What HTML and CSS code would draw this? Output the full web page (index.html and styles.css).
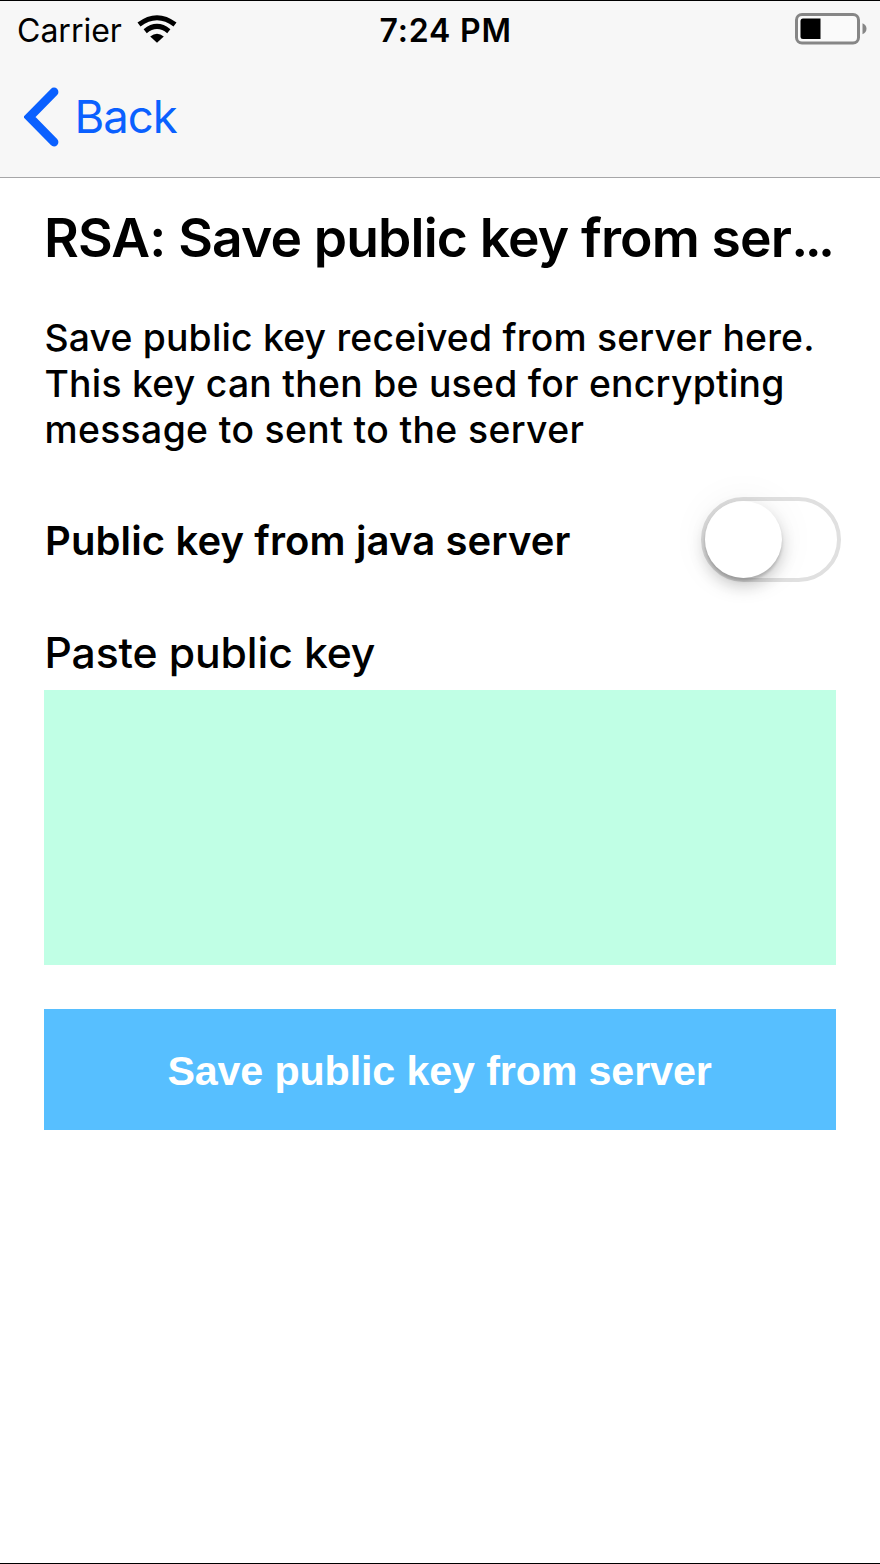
FILE: index.html
```html
<!DOCTYPE html>
<html lang="en">
<head>
<meta charset="utf-8">
<title>RSA: Save public key from server</title>
<link rel="stylesheet" href="styles.css">
</head>
<body>
<div class="screen">
  <header class="header">
    <div class="status">
      <div class="status-left">
        <span class="carrier">Carrier</span>
        <svg class="wifi" width="40" height="30" viewBox="0 0 40 30">
          <path d="M20 27.8 L13.2 21.4 Q20 16.2 26.8 21.4 Z" fill="#000"/>
          <path d="M8.2 16.2 Q20 6.6 31.8 16.2" fill="none" stroke="#000" stroke-width="5"/>
          <path d="M2 9.5 Q20 -4.1 38 9.5" fill="none" stroke="#000" stroke-width="5"/>
        </svg>
      </div>
      <span class="time">7:24 PM</span>
      <svg class="battery" width="74" height="34" viewBox="0 0 74 34">
        <rect x="3.5" y="2.5" width="62" height="28.5" rx="5.5" fill="#fff" fill-opacity=".4" stroke="#868686" stroke-width="3"/>
        <path d="M10 6.5 H27.5 V27 H10 Q7.5 27 7.5 24.5 V9 Q7.5 6.5 10 6.5 Z" fill="#000"/>
        <path d="M69.5 11.3 Q73.5 13 73.5 16.8 Q73.5 20.6 69.5 22.3 Z" fill="#868686"/>
      </svg>
    </div>
    <nav class="nav">
      <svg class="chevron" width="36" height="60" viewBox="0 0 36 60">
        <path d="M30 5 L5.5 30 L30 55" fill="none" stroke="#0a60ff" stroke-width="8.8" stroke-linecap="round" stroke-linejoin="miter"/>
      </svg>
      <span class="back">Back</span>
    </nav>
  </header>
  <main class="content">
    <h1 class="title">RSA: Save public key from ser<span class="ellipsis">...</span></h1>
    <p class="description">Save public key received from server here.<br><span class="wide">This key can then be used for encrypting</span><br><span class="wider">message to sent to the server</span></p>
    <div class="option">
      <span class="option-label">Public key from java server</span>
      <div class="switch"><div class="knob"></div></div>
    </div>
    <label class="field-label">Paste public key</label>
    <div class="field"></div>
    <div class="save"><span class="save-label">Save public key from server</span></div>
  </main>
</div>
</body>
</html>
```
FILE: styles.css
```css
* { box-sizing: border-box; }
body { margin: 0; background: #fff; color: #000; font-family: Inter, "Liberation Sans", sans-serif; }
.screen { height: 1564px; border-top: 1px solid #000; border-bottom: 1px solid #000; overflow: hidden; }
.header { height: 177px; background: #f7f7f7; border-bottom: 1px solid #a6a6a8; }
.status { display: grid; grid-template-columns: 1fr auto 1fr; align-items: center; height: 58px; padding: 0 13.5px 0 17px; font-size: 32px; line-height: 56px; }
.status-left { display: flex; align-items: center; gap: 15px; }
.carrier { padding-top: 2px; }
.wifi { display: block; }
.time { padding: 2px 0 0 8px; font-weight: 600; letter-spacing: .85px; }
.battery { display: block; justify-self: end; margin-bottom: 2px; }
.nav { display: flex; align-items: center; height: 115px; padding-left: 24px; color: #0a60ff; font-size: 45.5px; letter-spacing: -1px; }
.chevron { display: block; margin-right: 14.5px; }
.content { padding: 30px 44px 0; }
.title { margin: 0; font-size: 53.4px; line-height: 60px; font-weight: 600; letter-spacing: -.84px; white-space: nowrap; }
.ellipsis { letter-spacing: -3.6px; }
.description { margin: 47px 0 0; padding-left: .4px; font-size: 37.3px; line-height: 46px; font-weight: 500; letter-spacing: .21px; white-space: nowrap; }
.wide { letter-spacing: .28px; }
.wider { letter-spacing: .37px; }
.option { display: flex; justify-content: space-between; align-items: center; height: 85px; margin: 44px -5px 0 0; }
.option-label { padding: 2px 0 0 1px; font-size: 40px; font-weight: 600; line-height: 50px; letter-spacing: .12px; white-space: nowrap; }
.switch { width: 140px; height: 85px; padding: 1px 0; border: 4px solid #e0e0e0; border-radius: 43px; }
.knob { width: 77px; height: 77px; margin-top: -1px; border-radius: 50%; background: #fff; box-shadow: 0 8px 16px rgba(0,0,0,.2), 0 3px 3px rgba(0,0,0,.16), 0 0 40px rgba(0,0,0,.06); }
.field-label { display: block; margin-top: 46px; padding-left: .5px; font-size: 42.7px; line-height: 50px; font-weight: 500; letter-spacing: -.12px; }
.field { height: 275px; margin-top: 12px; background: #c0ffe5; }
.save { display: flex; align-items: center; justify-content: center; height: 121px; padding: 2px 1px 0 0; margin-top: 44px; background: #57bfff; color: #fff; font: bold 41.25px/50px "Liberation Sans", Arial, sans-serif; letter-spacing: -.14px; }
```
